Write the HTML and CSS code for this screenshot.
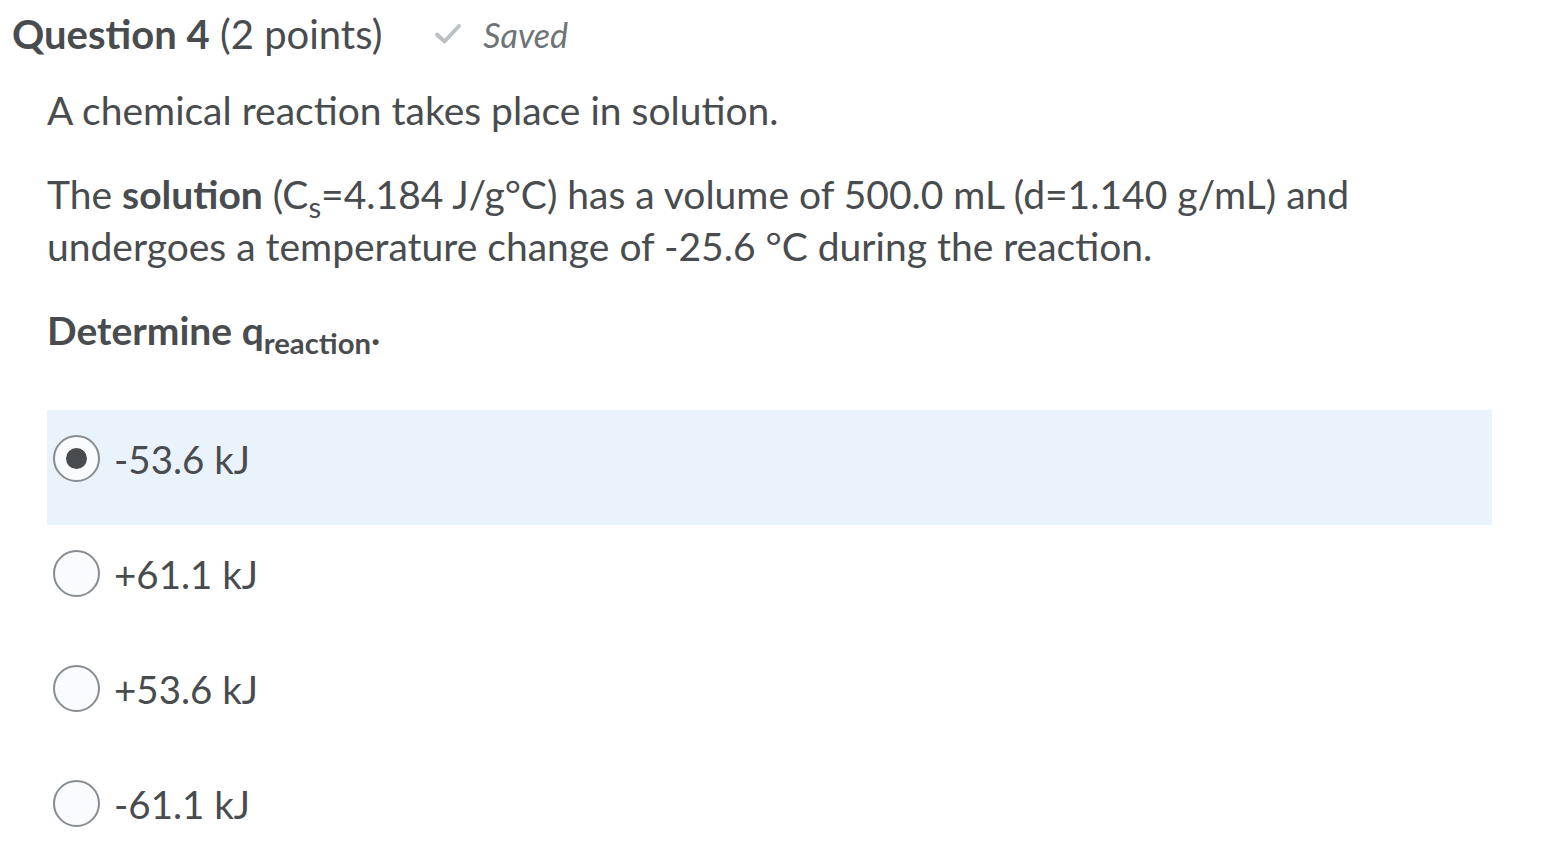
FILE: index.html
```html
<!DOCTYPE html>
<html>
<head>
<meta charset="utf-8">
<link rel="stylesheet" href="styles.css">
</head>
<body>
<div class="page">
  <div class="header">
    <h2 class="qtitle"><strong>Question 4</strong> (2 points)</h2>
    <span class="saved">
      <svg class="check" width="28" height="24" viewBox="0 0 28 24"><path d="M3 12.5 L10.5 19.5 L25 4" fill="none" stroke="#b9bfc3" stroke-width="3.8" stroke-linecap="round" stroke-linejoin="round"/></svg>
      <em>Saved</em>
    </span>
  </div>
  <div class="body">
    <p class="para first">A chemical reaction takes place in solution.</p>
    <p class="para second">The <strong>solution</strong> (C<sub>s</sub>=4.184 J/g°C) has a volume of 500.0 mL (d=1.140 g/mL) and undergoes a temperature change of -25.6 °C during the reaction.</p>
    <p class="para strong">Determine q<sub>reaction</sub>.</p>
    <div class="options">
      <label class="option selected"><span class="radio checked"></span><span class="opt-text">-53.6 kJ</span></label>
      <label class="option"><span class="radio"></span><span class="opt-text">+61.1 kJ</span></label>
      <label class="option"><span class="radio"></span><span class="opt-text">+53.6 kJ</span></label>
      <label class="option"><span class="radio"></span><span class="opt-text">-61.1 kJ</span></label>
    </div>
  </div>
</div>
</body>
</html>
```
FILE: styles.css
```css
html, body { margin: 0; padding: 0; background: #fff; }
body { font-family: Lato, "Noto Sans", sans-serif; color: #494c4e; }
.page { padding: 7px 0 0 12px; }
.header { display: flex; align-items: center; height: 54px; }
.qtitle { margin: 0; font-size: 40px; font-weight: 400; }
.qtitle strong { font-weight: 700; }
.saved { display: flex; align-items: center; margin-left: 52px; color: #6e7376; font-size: 34px; }
.check { margin-right: 21px; }
.body { padding-left: 35px; width: 1445px; }
.para { margin: 0; font-size: 39px; line-height: 52px; }
.para.first { margin-top: 23px; }
.para.second { margin-top: 32px; }
.para strong { font-weight: 700; }
.para.strong { font-weight: 700; margin-top: 32px; }
sub { font-size: 0.75em; line-height: 0; vertical-align: -0.3em; }
.options { margin-top: 54px; }
.option { display: flex; align-items: center; height: 115px; box-sizing: border-box; padding: 0 0 18px 6px; }
.option.selected { background: #eaf2fc; }
.radio { width: 43px; height: 43px; border: 2px solid #868c8f; border-radius: 50%; background: #f9fbff; box-sizing: content-box; display: flex; align-items: center; justify-content: center; margin-right: 14px; }
.radio.checked::after { content: ""; width: 21px; height: 21px; border-radius: 50%; background: #494c4e; }
.opt-text { font-size: 38.5px; }
```
